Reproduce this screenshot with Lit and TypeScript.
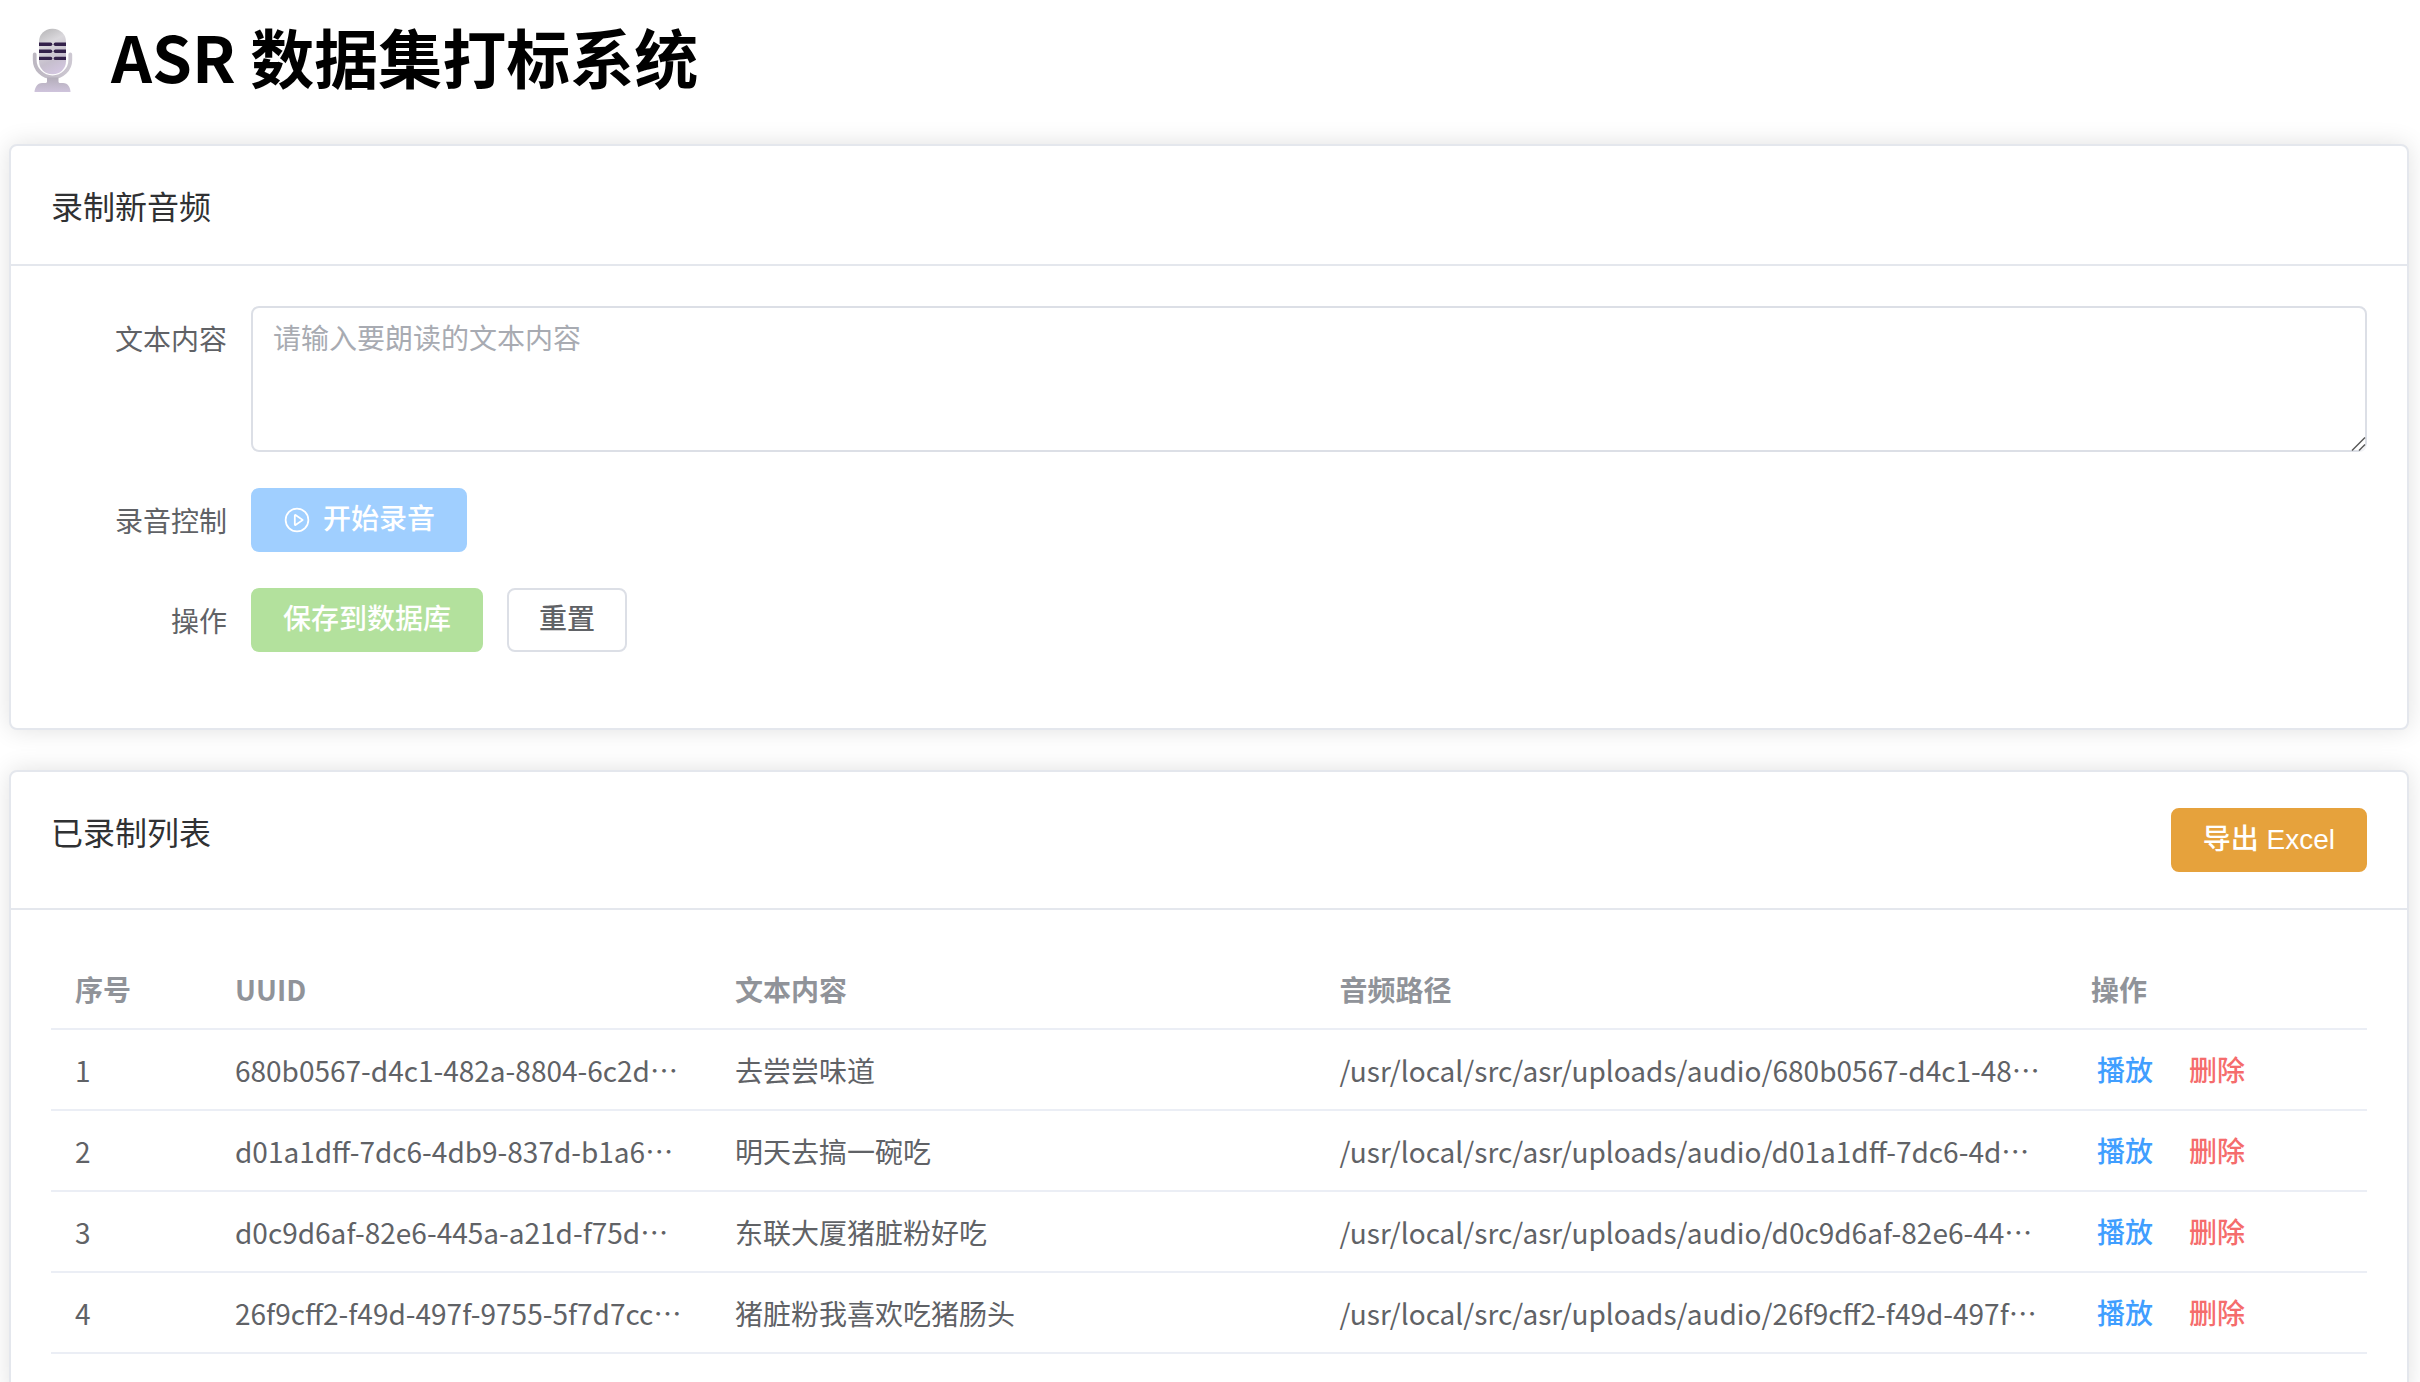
import { LitElement, html, css, svg } from "lit";
import { customElement, state } from "lit/decorators.js";

interface Recording {
  uuid: string;
  text: string;
  path: string;
}

const recordings: Recording[] = [
  { uuid: "680b0567-d4c1-482a-8804-6c2d…", text: "去尝尝味道", path: "/usr/local/src/asr/uploads/audio/680b0567-d4c1-48…" },
  { uuid: "d01a1dff-7dc6-4db9-837d-b1a6…", text: "明天去搞一碗吃", path: "/usr/local/src/asr/uploads/audio/d01a1dff-7dc6-4d…" },
  { uuid: "d0c9d6af-82e6-445a-a21d-f75d…", text: "东联大厦猪脏粉好吃", path: "/usr/local/src/asr/uploads/audio/d0c9d6af-82e6-44…" },
  { uuid: "26f9cff2-f49d-497f-9755-5f7d7cc…", text: "猪脏粉我喜欢吃猪肠头", path: "/usr/local/src/asr/uploads/audio/26f9cff2-f49d-497f…" },
];

const slots = [42.6, 49.6, 56.7].map(
  (y) => svg`
    <path d="M39 ${y}h11.6a1.7 1.7 0 0 1 0 3.4H39z" fill="#33214a" />
    <path d="M66 ${y}H55.400a1.7 1.7 0 0 0 0 3.4H66z" fill="#33214a" />`
);

const micIcon = html`<svg class="mic" viewBox="29 17 46 76" aria-hidden="true">
  <defs>
    <linearGradient id="body" x1="0.3" y1="0" x2="0.6" y2="1">
      <stop offset="0" stop-color="#bcbbbd" />
      <stop offset="0.3" stop-color="#dad8dc" />
      <stop offset="0.7" stop-color="#c6bfcd" />
      <stop offset="1" stop-color="#d3c6e0" />
    </linearGradient>
    <linearGradient id="arms" x1="0" y1="0" x2="1" y2="0">
      <stop offset="0" stop-color="#bdb8c2" />
      <stop offset="0.5" stop-color="#c4bec9" />
      <stop offset="1" stop-color="#cdc8d2" />
    </linearGradient>
    <linearGradient id="stand" x1="0" y1="0" x2="0" y2="1">
      <stop offset="0" stop-color="#b3adb9" />
      <stop offset="1" stop-color="#cfc4dc" />
    </linearGradient>
  </defs>
  <path d="M34.700 54.500v5.500a17.800 17.300 0 0 0 35.600 0v-5.500" fill="none" stroke="url(#arms)" stroke-width="3.800" stroke-linecap="round" />
  <path d="M47 77.500h11.500v4c0 1 .8 1.500 2 1.500h2.500c2.500 0 4.500 1 5.800 3.300 1 1.800 1.700 3.700 1.700 5.700h-36c0-2 .8-4 2-5.900 1.300-2.100 3.200-3.100 5.600-3.100H45c1.200 0 2-.5 2-1.500z" fill="url(#stand)" />
  <rect x="39" y="28.700" width="27" height="45.500" rx="13" fill="url(#body)" />
  ${slots}
</svg>`;

const playIcon = html`<svg class="play" viewBox="0 0 1024 1024" aria-hidden="true">
  <path fill="currentColor" d="M512 64a448 448 0 1 1 0 896 448 448 0 0 1 0-896m0 832a384 384 0 0 0 0-768 384 384 0 0 0 0 768m-48-247.616L668.608 512 464 375.616zm10.624-342.656 249.472 166.336a48 48 0 0 1 0 79.872L474.624 718.272A48 48 0 0 1 400 678.336V345.6a48 48 0 0 1 74.624-39.872" />
</svg>`;

const gripIcon = html`<svg class="grip" viewBox="0 0 16 16" aria-hidden="true">
  <path d="M16 8v8H8z" fill="#fff" opacity="0.6" />
  <path d="M1 14.500 14 1.500M8 14.500l6-6" fill="none" stroke="#5a5a5a" stroke-width="1.500" />
</svg>`;

@customElement("app-root")
export class AppRoot extends LitElement {
  @state() private draft = "";

  static styles = css`
    :host {
      display: block;
      box-sizing: border-box;
      padding: 0 11px 40px 9px;
      font-family: "Noto Sans CJK SC", sans-serif;
      font-size: 28px;
      color: #606266;
      background: #fff;
    }
    *, *::before, *::after { box-sizing: border-box; }
    .page {
      max-width: 2400px;
      margin: 0 auto;
      display: flex;
      flex-direction: column;
      gap: 40px;
    }
    .title {
      display: flex;
      gap: 36px;
      align-items: center;
      margin: 0;
      padding: 6px 0 0 20px;
      height: 104px;
      font-size: 64px;
      line-height: 92px;
      font-weight: 700;
      color: #000;
    }
    .mic { flex: none; width: 46px; height: 76px; }
    .card {
      border: 2px solid #e4e7ed;
      border-radius: 8px;
      background: #fff;
      box-shadow: 0 0 24px rgba(0, 0, 0, 0.12);
    }
    .card-header {
      display: flex;
      justify-content: space-between;
      align-items: flex-start;
      padding: 36px 40px;
      border-bottom: 2px solid #e4e7ed;
    }
    .card-title {
      margin: 0;
      font-size: 32px;
      line-height: 46px;
      font-weight: 400;
      color: #303133;
    }
    .card-body { padding: 40px; }
    .form-item { display: flex; margin-bottom: 36px; }
    .label {
      flex: none;
      width: 200px;
      padding-right: 24px;
      text-align: right;
      line-height: 64px;
    }
    .controls { position: relative; flex: 1; display: flex; gap: 24px; }
    .area {
      display: block;
      flex: 1;
      height: 146px;
      padding: 8px 20px;
      border: 2px solid #dcdfe6;
      border-radius: 8px;
      outline: none;
      resize: vertical;
      font: inherit;
      line-height: 42px;
      color: #606266;
    }
    .area::placeholder { color: #a8abb2; }
    .area::-webkit-resizer { background: transparent; }
    .grip {
      position: absolute;
      right: 0;
      bottom: 0;
      width: 16px;
      height: 16px;
      pointer-events: none;
    }
    .btn {
      display: inline-flex;
      align-items: center;
      gap: 12px;
      height: 64px;
      padding: 0 30px;
      border: 2px solid #dcdfe6;
      border-radius: 8px;
      background: #fff;
      color: #606266;
      font-family: "Liberation Sans", "Noto Sans CJK SC", sans-serif;
      font-size: 28px;
      font-weight: 500;
      line-height: 28px;
      white-space: nowrap;
    }
    .primary { background: #a0cfff; border-color: #a0cfff; color: #fff; }
    .success { background: #b3e19d; border-color: #b3e19d; color: #fff; }
    .warning { background: #e6a23c; border-color: #e6a23c; color: #fff; }
    .play { width: 28px; height: 28px; }
    .table {
      width: 100%;
      table-layout: fixed;
      border-collapse: separate;
      border-spacing: 0;
    }
    .table th, .table td {
      height: 81px;
      padding: 0 24px;
      border-bottom: 2px solid #ebeef5;
      text-align: left;
      line-height: 46px;
      white-space: nowrap;
      overflow: hidden;
    }
    .table th { height: 80px; color: #909399; font-weight: 700; }
    .col-index { width: 160px; }
    .col-uuid { width: 500px; }
    .col-text { width: 26.1%; }
    .col-ops { width: 300px; }
    .ops { display: flex; gap: 24px; padding-top: 4px; }
    .link {
      padding: 0 6px;
      border: 0;
      background: none;
      font-family: "Liberation Sans", "Noto Sans CJK SC", sans-serif;
      font-size: 28px;
      font-weight: 500;
      line-height: 46px;
      color: #409eff;
    }
    .danger { color: #f56c6c; }
  `;

  private onInput(e: Event) {
    this.draft = (e.target as HTMLTextAreaElement).value;
  }

  private reset() {
    this.draft = "";
  }

  render() {
    return html`
      <main class="page" lang="zh-CN">
        <h1 class="title">${micIcon}<span>ASR 数据集打标系统</span></h1>

        <section class="card">
          <header class="card-header"><h2 class="card-title">录制新音频</h2></header>
          <form class="card-body" @submit=${(e: Event) => e.preventDefault()}>
            <div class="form-item">
              <label class="label" for="content">文本内容</label>
              <div class="controls">
                <textarea id="content" class="area" placeholder="请输入要朗读的文本内容" .value=${this.draft} @input=${this.onInput}></textarea>
                ${gripIcon}
              </div>
            </div>
            <div class="form-item">
              <label class="label" for="record">录音控制</label>
              <div class="controls">
                <button id="record" type="button" class="btn primary" ?disabled=${!this.draft}>${playIcon}<span>开始录音</span></button>
              </div>
            </div>
            <div class="form-item">
              <label class="label" for="save">操作</label>
              <div class="controls">
                <button id="save" type="submit" class="btn success" disabled>保存到数据库</button>
                <button type="button" class="btn" @click=${this.reset}>重置</button>
              </div>
            </div>
          </form>
        </section>

        <section class="card">
          <header class="card-header">
            <h2 class="card-title">已录制列表</h2>
            <button type="button" class="btn warning">导出 Excel</button>
          </header>
          <div class="card-body">
            <table class="table">
              <colgroup>
                <col class="col-index" /><col class="col-uuid" /><col class="col-text" /><col /><col class="col-ops" />
              </colgroup>
              <thead>
                <tr><th>序号</th><th>UUID</th><th>文本内容</th><th>音频路径</th><th>操作</th></tr>
              </thead>
              <tbody>
                ${recordings.map(
                  (r, i) => html`<tr>
                    <td>${i + 1}</td>
                    <td>${r.uuid}</td>
                    <td>${r.text}</td>
                    <td>${r.path}</td>
                    <td>
                      <div class="ops">
                        <button type="button" class="link">播放</button>
                        <button type="button" class="link danger">删除</button>
                      </div>
                    </td>
                  </tr>`
                )}
              </tbody>
            </table>
          </div>
        </section>
      </main>
    `;
  }
}
